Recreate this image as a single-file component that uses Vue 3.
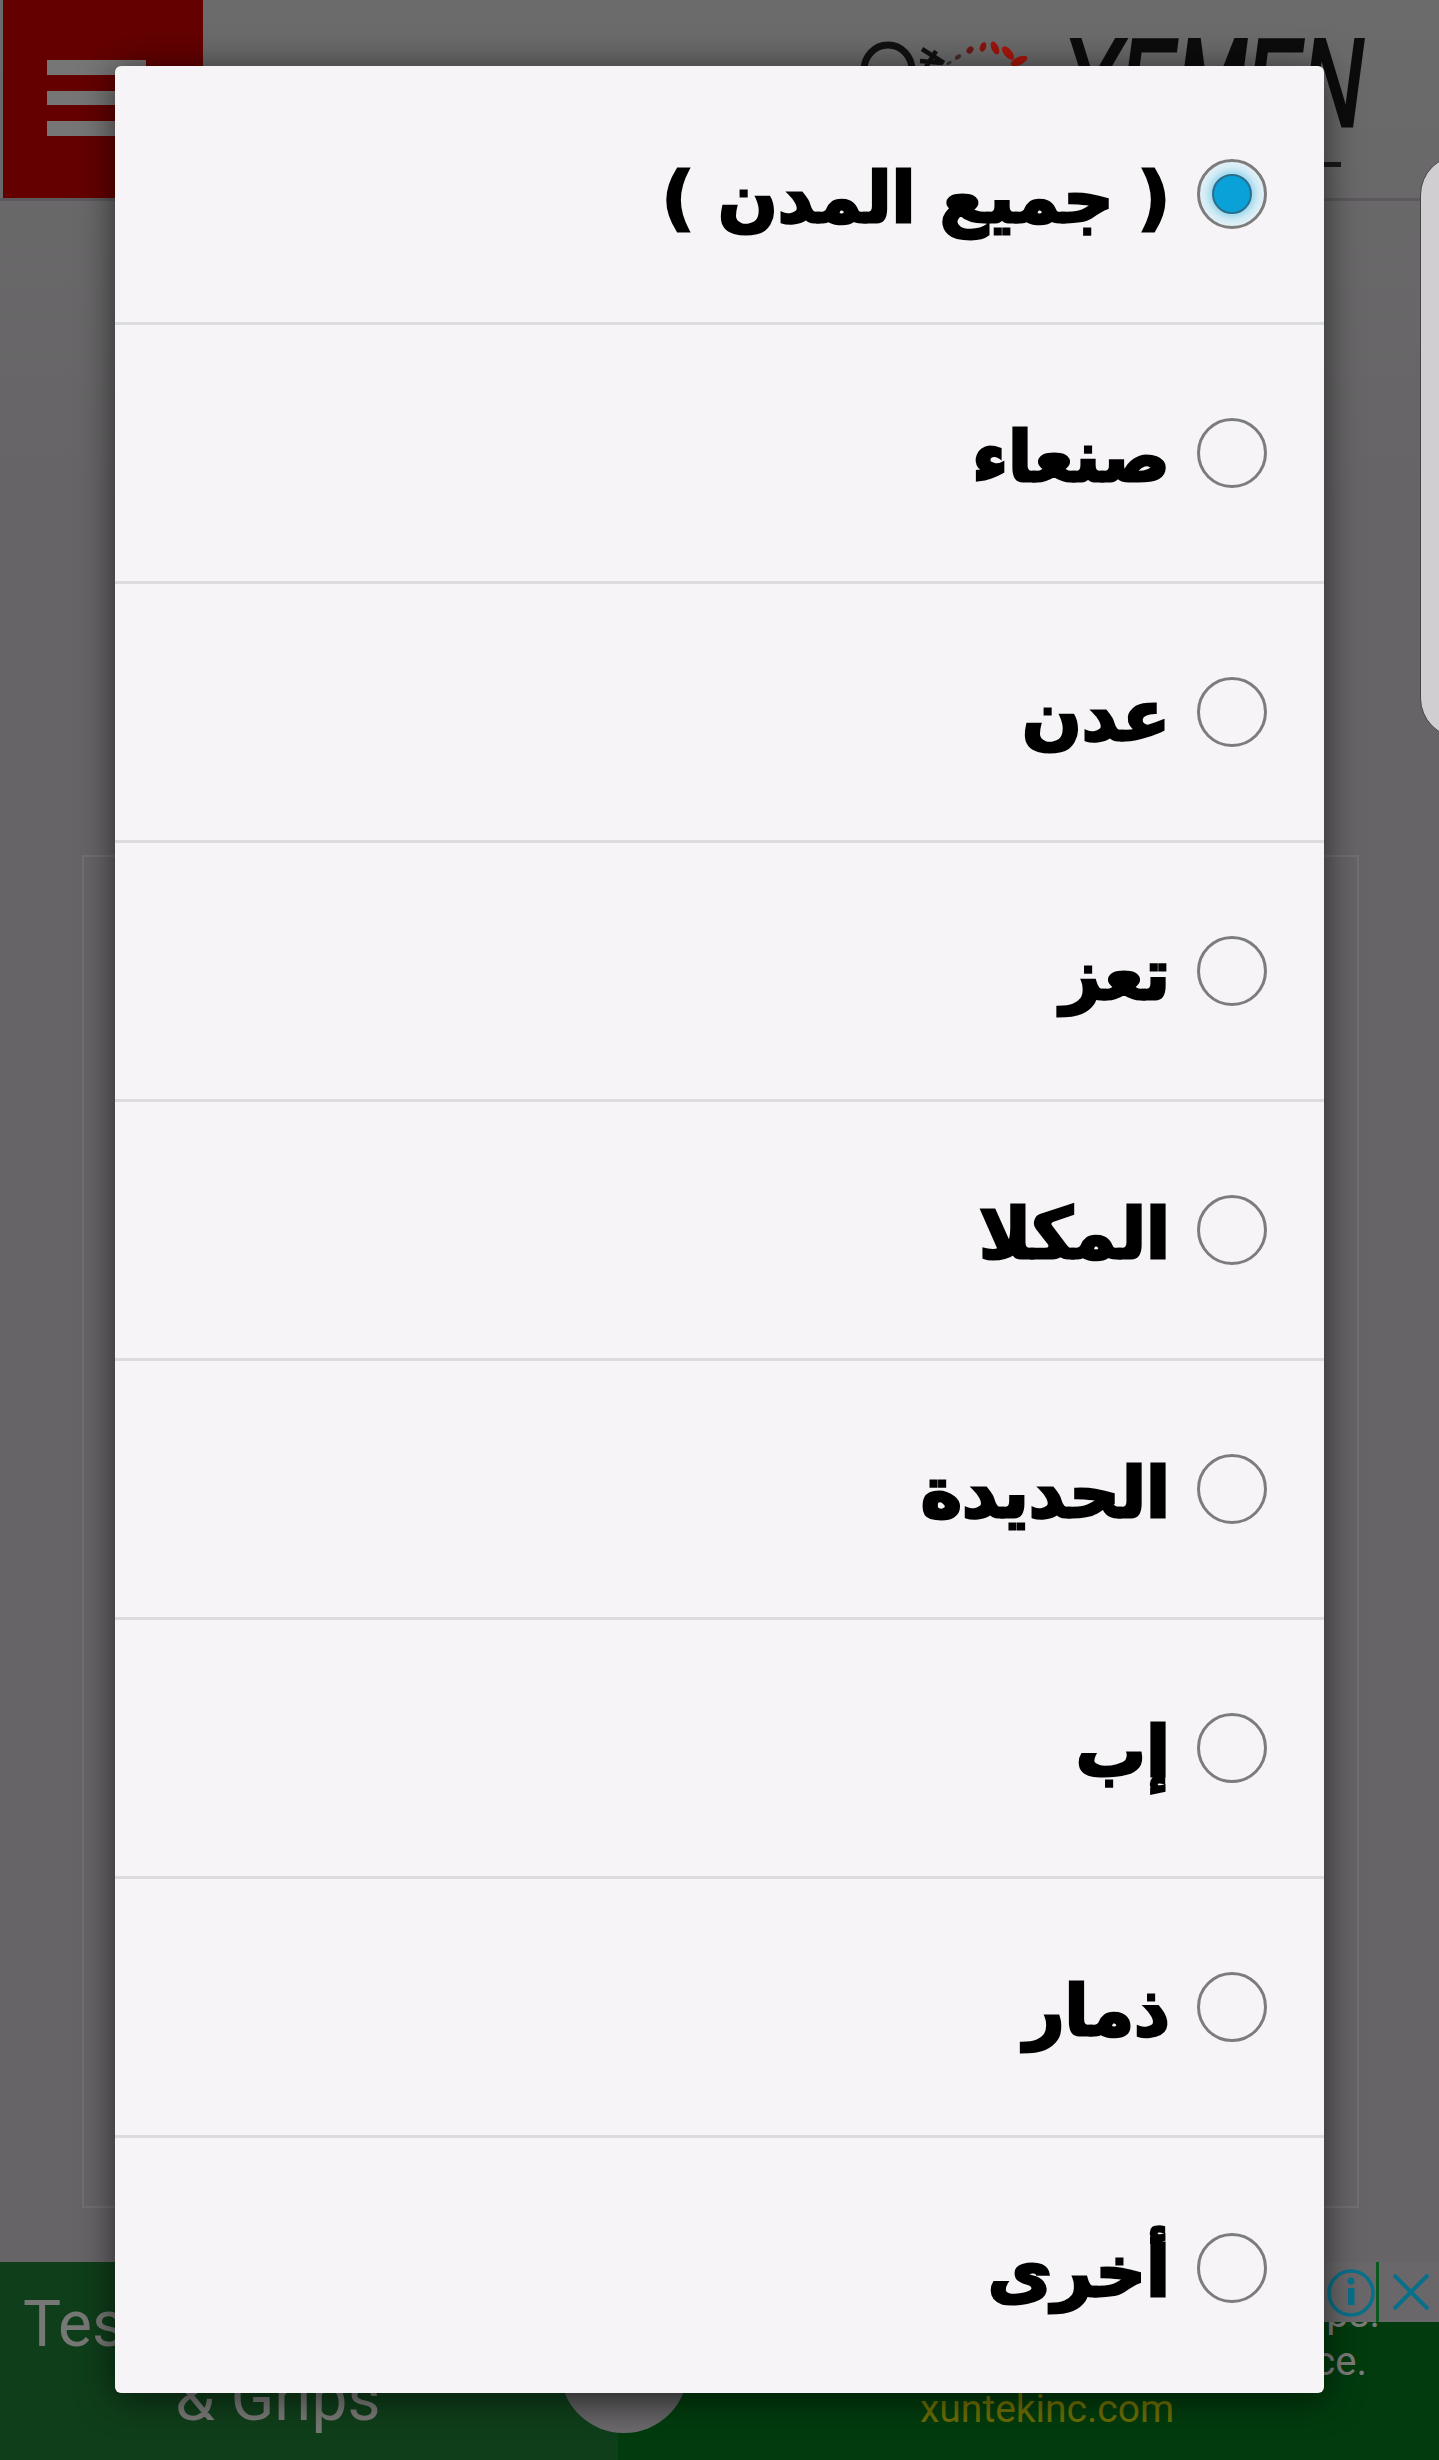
<script setup>
const cities = ['( جميع المدن )', 'صنعاء', 'عدن', 'تعز', 'المكلا', 'الحديدة', 'إب', 'ذمار', 'أخرى']
const dots = [
  { cx: 89, cy: 26, rx: 3, ry: 1.5, r: -30, c: '#333' },
  { cx: 98, cy: 20, rx: 3.5, ry: 2, r: -35, c: '#4a2a2a' },
  { cx: 110, cy: 13, rx: 4, ry: 3, r: -50, c: '#6a1a16' },
  { cx: 123, cy: 10, rx: 5, ry: 3, r: -70, c: '#8c120c' },
  { cx: 135, cy: 11, rx: 7, ry: 3.5, r: 65, c: '#9c140c' },
  { cx: 148, cy: 16, rx: 8, ry: 4, r: 50, c: '#a8160c' },
  { cx: 159, cy: 24, rx: 9, ry: 4, r: -25, c: '#a8160c' },
]
</script>

<template>
  <div class="page">
    <header class="topbar">
      <div class="menu"><i></i><i></i><i></i></div>
      <svg class="emblem" width="170" height="40" viewBox="0 0 170 40" aria-hidden="true">
        <ellipse cx="28" cy="33" rx="24" ry="25" fill="none" stroke="#111" stroke-width="7" />
        <path d="M62 12l22 14M66 30l10-16M60 24l22 2" stroke="#111" stroke-width="4.5" fill="none" />
        <ellipse v-for="(d, i) in dots" :key="i" :cx="d.cx" :cy="d.cy" :rx="d.rx" :ry="d.ry" :fill="d.c" :transform="`rotate(${d.r} ${d.cx} ${d.cy})`" />
      </svg>
      <div class="wordmark">YEMEN</div>
      <span class="tagline"></span>
    </header>
    <main class="content">
      <div class="box"></div>
    </main>
    <footer class="ad">
      <div class="ad-left">
        <div class="ad-title">Testing</div>
        <div class="ad-title second">&amp; Grips</div>
      </div>
      <div class="ad-right">
        <p class="ad-copy">clips.<span>service.</span></p>
        <p class="ad-url">xuntekinc.com</p>
      </div>
      <div class="ad-circle"></div>
      <div class="ad-tools">
        <svg width="56" height="56" viewBox="0 0 56 56" aria-hidden="true">
          <circle cx="28" cy="29" r="22" fill="none" stroke="#08708a" stroke-width="3.5" />
          <circle cx="28" cy="17" r="3.5" fill="#08708a" />
          <rect x="25" y="24" width="6.5" height="17" fill="#08708a" />
        </svg>
        <i class="sep"></i>
        <svg width="40" height="40" viewBox="0 0 40 40" aria-hidden="true">
          <path d="M3 3l34 34M37 3L3 37" stroke="#08708a" stroke-width="4" fill="none" />
        </svg>
      </div>
    </footer>
    <aside class="side-card"></aside>
    <div class="dialog">
      <div v-for="(c, i) in cities" :key="c" class="row">
        <span class="label" dir="rtl">{{ c }}</span>
        <span class="radio" :class="{ on: i === 0 }"><b v-if="i === 0"></b></span>
      </div>
    </div>
  </div>
</template>

<style>
html, body { margin: 0; background: #676567; }
</style>

<style scoped>
.page { position: relative; width: 1439px; height: 2460px; overflow: hidden; background: linear-gradient(#6c6b6c, #666466 500px); font-family: Roboto, "DejaVu Sans", sans-serif; display: flex; flex-direction: column; }
.topbar { position: relative; flex: none; height: 201px; border-bottom: 3px solid #5b595b; box-sizing: border-box; }
.menu { width: 200px; height: 198px; margin-left: 3px; background: #640000; display: flex; flex-direction: column; gap: 16px; padding: 60px 0 0 44px; box-sizing: border-box; }
.menu i { display: block; width: 99px; height: 14.5px; background: #767676; }
.emblem { position: absolute; left: 860px; top: 37px; }
.wordmark { position: absolute; right: 76px; top: 19px; font: italic 400 122px/1.05 "Liberation Sans", sans-serif; color: #0c0c0c; transform: scaleX(.69); transform-origin: right top; -webkit-text-stroke: 5px #0c0c0c; }
.tagline { position: absolute; left: 1323px; top: 162px; width: 18px; height: 5px; background: #1a1a1a; }
.content { flex: 1; padding: 654px 80px 54px 82px; box-sizing: border-box; display: flex; }
.box { flex: 1; border: 2px solid #716f71; }
.ad { position: relative; flex: none; height: 198px; display: grid; grid-template-columns: 618px 1fr; }
.ad-left { background: #0f3e1a; color: #777875; padding: 26px 0 0 23px; overflow: hidden; }
.ad-title { font-size: 64px; line-height: 74px; white-space: nowrap; }
.ad-title.second { margin-left: 152px; }
.ad-right { background: #023b0d; position: relative; overflow: hidden; color: #7b7c79; }
.ad-copy { margin: 0; font-size: 40px; line-height: 48px; text-align: right; white-space: nowrap; position: absolute; right: 59px; top: 28px; }
.ad-copy span { display: block; margin-right: 13px; }
.ad-url { margin: 0; position: absolute; left: 302px; top: 124px; font-size: 39px; line-height: 46px; color: #6b6b05; }
.ad-circle { position: absolute; left: 560px; top: 43px; width: 128px; height: 128px; border-radius: 50%; background: linear-gradient(#3c3c3c, #4a4a4a 50%, #6c6a6c); }
.ad-tools { position: absolute; right: 0; top: 0; width: 116px; height: 60px; background: #696769; display: flex; align-items: center; box-sizing: border-box; }
.ad-tools svg { flex: none; }
.ad-tools svg:last-child { margin-left: 12px; }
.sep { width: 3px; height: 60px; background: #0a5a22; margin-left: -3px; flex: none; }
.side-card { position: absolute; left: 1420px; top: 155px; width: 80px; height: 583px; background: #d0ced1; border: 1.5px solid #454345; border-radius: 45px; box-sizing: border-box; }
.dialog { position: absolute; left: 115px; top: 66px; width: 1209px; height: 2327px; background: #f6f4f7; border-radius: 6px; box-shadow: 0 4px 36px rgba(0,0,0,.6); z-index: 2; }
.row { height: 259px; box-sizing: border-box; border-bottom: 3px solid #dcdbde; display: flex; align-items: center; justify-content: flex-end; gap: 27px; padding-right: 57px; }
.row:last-child { border-bottom: 0; }
.label { font-family: "DejaVu Sans", sans-serif; font-size: 70px; font-weight: 700; color: #000; -webkit-text-stroke: 3px #000; white-space: nowrap; padding-top: 8px; }
.radio { width: 70px; height: 70px; box-sizing: border-box; border: 3px solid #7c7c7c; border-radius: 50%; display: flex; align-items: center; justify-content: center; flex: none; }
.radio.on { background: radial-gradient(circle, #a8dcef 0 21px, #cfeaf4 26px, #e6f2f7 33px); }
.radio b { width: 40px; height: 40px; box-sizing: border-box; border: 2px solid #2c6f8c; border-radius: 50%; background: #0aa0d8; }
</style>
